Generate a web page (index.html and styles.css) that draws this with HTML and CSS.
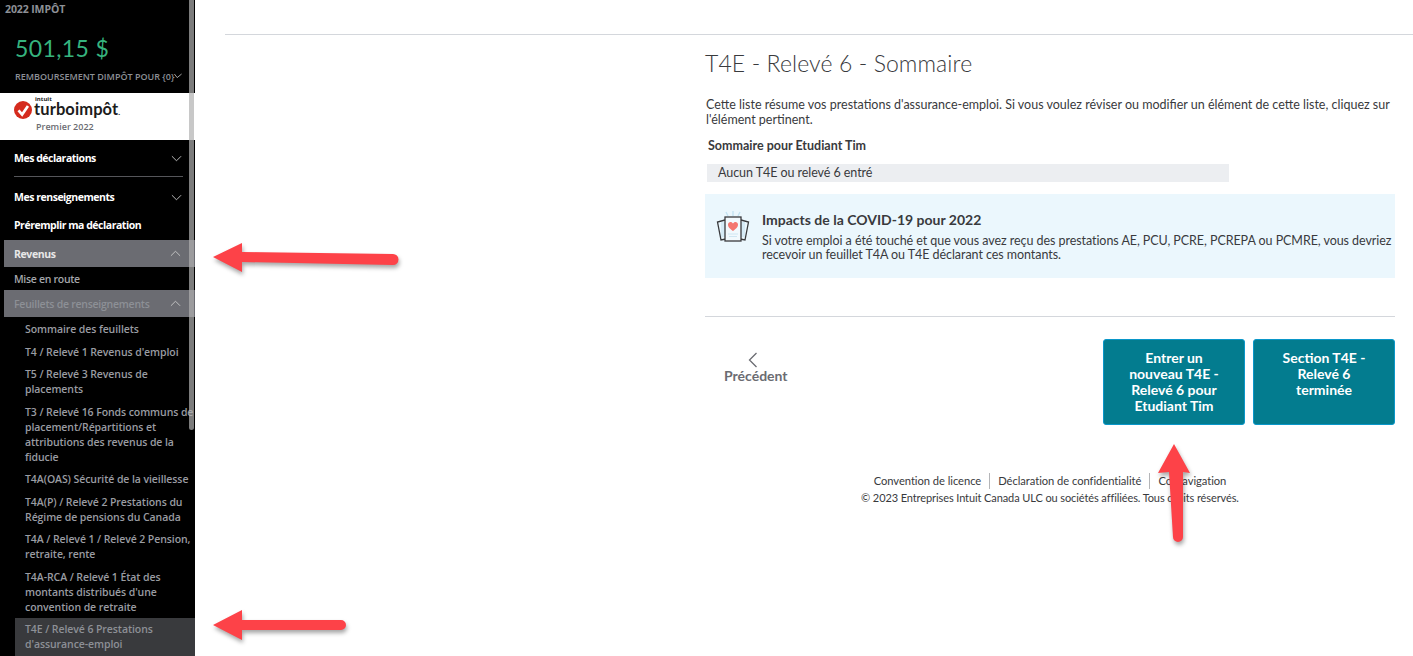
FILE: index.html
```html
<!DOCTYPE html>
<html lang="fr">
<head>
<meta charset="utf-8">
<title>T4E - Relevé 6 - Sommaire</title>
<link rel="stylesheet" href="styles.css">
</head>
<body>
<div class="app">
  <aside class="sidebar">
    <div class="tax">
      <div class="tax-year">2022 IMPÔT</div>
      <div class="tax-amount">501,15 $</div>
      <div class="tax-label">REMBOURSEMENT DIMPÔT POUR {0}<svg class="tax-chev" viewBox="0 0 10 6"><path d="M.5.5 4 5 9.500.5"/></svg></div>
    </div>
    <div class="logo">
      <div class="logo-row">
        <svg class="logo-check" viewBox="0 0 20 20"><circle cx="10" cy="10" r="10" fill="#d52b1e"/><path d="M5 10.500 9 15 15.500 5.500" fill="none" stroke="#fff" stroke-width="3"/></svg>
        <div class="logo-words"><span class="logo-intuit">intuit</span><span class="logo-name">turboimpôt<small>.</small></span></div>
      </div>
      <div class="logo-sub">Premier 2022</div>
    </div>
    <nav class="nav">
      <div class="nav-top divided">Mes déclarations<svg class="chev" viewBox="0 0 12 7"><path d="M1 1l5 5 5-5"/></svg></div>
      <div class="nav-top second">Mes renseignements<svg class="chev" viewBox="0 0 12 7"><path d="M1 1l5 5 5-5"/></svg></div>
      <div class="nav-top third">Préremplir ma déclaration</div>
      <div class="nav-section active">Revenus<svg class="chev" viewBox="0 0 12 7"><path d="M1 6l5-5 5 5"/></svg></div>
      <div class="nav-plain">Mise en route</div>
      <div class="nav-section dim">Feuillets de renseignements<svg class="chev" viewBox="0 0 12 7"><path d="M1 6l5-5 5 5"/></svg></div>
      <ul class="nav-list">
        <li>Sommaire des feuillets</li>
        <li>T4 / Relevé 1 Revenus d'emploi</li>
        <li>T5 / Relevé 3 Revenus de placements</li>
        <li>T3 / Relevé 16 Fonds communs de placement/Répartitions et attributions des revenus de la fiducie</li>
        <li>T4A(OAS) Sécurité de la vieillesse</li>
        <li>T4A(P) / Relevé 2 Prestations du Régime de pensions du Canada</li>
        <li>T4A / Relevé 1 / Relevé 2 Pension, retraite, rente</li>
        <li>T4A-RCA / Relevé 1 État des montants distribués d'une convention de retraite</li>
        <li class="current">T4E / Relevé 6 Prestations d'assurance-emploi</li>
      </ul>
    </nav>
    <div class="thumb"></div>
  </aside>
  <main class="main">
    <div class="top-rule"></div>
    <section class="content">
      <h1 class="title">T4E - Relevé 6 - Sommaire</h1>
      <p class="intro">Cette liste résume vos prestations d'assurance-emploi. Si vous voulez réviser ou modifier un élément de cette liste, cliquez sur l'élément pertinent.</p>
      <div class="summary-head">Sommaire pour Etudiant Tim</div>
      <div class="summary-row">Aucun T4E ou relevé 6 entré</div>
      <div class="notice">
        <svg class="notice-icon" viewBox="0 0 34 34">
          <path d="M17 1v5M10 2l2 4M24 2l-2 4" stroke="#c5e3f2" stroke-width="1.400" fill="none"/>
          <rect x="5" y="12" width="24" height="15" fill="#d6ebf6"/>
          <path d="M9 10 1.500 12 5 30l5-1M25 10l7.500 2L29 30l-5-1" fill="none" stroke="#393a3d" stroke-width="1.300"/>
          <rect x="9" y="7" width="16" height="24" fill="#f2f9fd" stroke="#393a3d" stroke-width="1.300"/>
          <path d="M17 21c-4-3-5-4.500-5-6.500 0-3 3.800-3.500 5-1 1.200-2.500 5-2 5 1 0 2-1 3.500-5 6.500z" fill="#f4766f"/>
          <path d="M12 24h10M13 26.500h8" stroke="#cfe6f2" stroke-width="1"/>
        </svg>
        <div class="notice-text">
          <div class="notice-title">Impacts de la COVID-19 pour 2022</div>
          <div class="notice-body">Si votre emploi a été touché et que vous avez reçu des prestations AE, PCU, PCRE, PCREPA ou PCMRE, vous devriez recevoir un feuillet T4A ou T4E déclarant ces montants.</div>
        </div>
      </div>
      <div class="rule"></div>
      <div class="actions">
        <div class="back">
          <svg class="back-icon" viewBox="0 0 10 16"><path d="M8.500 1 1.500 8l7 7"/></svg>
          <span>Précédent</span>
        </div>
        <div class="buttons">
          <button class="btn">Entrer un nouveau T4E - Relevé 6 pour Etudiant Tim</button>
          <button class="btn">Section T4E - Relevé 6 terminée</button>
        </div>
      </div>
      <footer class="footer">
        <div class="links"><span>Convention de licence</span><span>Déclaration de confidentialité</span><span>Co-navigation</span></div>
        <div class="copy">© 2023 Entreprises Intuit Canada ULC ou sociétés affiliées. Tous droits réservés.</div>
      </footer>
    </section>
  </main>
</div>
<svg class="arrow arrow-a" viewBox="0 0 190 34"><path d="M1 17 30 3v9l151 2a5.500 5.500 0 0 1 0 11L30 22v10z" fill="#fd4248"/></svg>
<svg class="arrow arrow-b" viewBox="0 0 136 34"><path d="M1 17 30 2v10h99a5 5 0 0 1 0 10H30v10z" fill="#fd4248"/></svg>
<svg class="arrow arrow-c" viewBox="0 0 36 102"><path d="M18 2 34 31l-7-1v65a5 5 0 0 1-10 0L13 30l-11 1z" fill="#fd4248"/></svg>
</body>
</html>
```
FILE: styles.css
```css
* { box-sizing: border-box; }
html, body { margin: 0; height: 656px; overflow: hidden; background: #fff; }
body { font-family: "Lato", "Liberation Sans", sans-serif; color: #393a3d; position: relative; }
.app { display: flex; height: 656px; }

.sidebar { width: 195px; flex: none; background: #000; position: relative; overflow: hidden; font-family: "Open Sans", "Noto Sans", sans-serif; font-weight: 600; }
.tax { height: 93px; padding: 2px 0 0 5px; }
.tax-year { font-size: 10.500px; line-height: 14px; color: #8d9096; font-weight: 700; letter-spacing: -.1px; }
.tax-amount { font-size: 23px; line-height: 30px; margin: 17px 0 0 10px; color: #36b37e; font-weight: 400; font-family: "Lato", sans-serif; letter-spacing: .4px; }
.tax-label { font-size: 9px; line-height: 12px; margin: 8px 0 0 10px; color: #8d9096; position: relative; white-space: nowrap; }
.tax-chev { position: absolute; left: 159px; top: 2px; width: 8px; height: 6px; fill: none; stroke: #c8c8c8; }
.logo { height: 47px; background: #fff; padding: 6px 0 0 14px; }
.logo-row { display: flex; gap: 2px; align-items: flex-end; height: 21px; }
.logo-check { width: 18px; height: 18px; flex: none; margin-bottom: 1px; }
.logo-words { display: flex; flex-direction: column; color: #1c1c1c; }
.logo-intuit { font-size: 6px; line-height: 6px; font-weight: 700; margin-left: 1px; }
.logo-name { font-size: 16.500px; line-height: 15px; font-family: "Lato", sans-serif; font-weight: 700; letter-spacing: .1px; }
.logo-name small { font-size: 8px; }
.logo-sub { font-size: 9px; line-height: 12px; margin: 1px 0 0 22px; color: #6b6c72; }

.nav-top { display: flex; align-items: center; justify-content: space-between; color: #fff; font-size: 10.500px; font-weight: 700; margin-left: 14px; width: 169px; letter-spacing: -.47px; }
.divided { height: 37px; border-bottom: 1px solid #55565a; padding-right: 1px; }
.second { height: 40px; padding-right: 1px; }
.third { height: 16px; }
.nav-section { height: 27px; margin-left: 4px; padding: 0 14px 0 10px; display: flex; align-items: center; justify-content: space-between; font-size: 10.500px; font-weight: 700; background: #6b6c72; color: #e8e8e8; }
.active { margin-top: 7px; letter-spacing: -.4px; }
.dim { color: #8d9096; font-weight: 600; letter-spacing: -.25px; }
.nav-plain { height: 23px; padding: 0 0 0 14px; display: flex; align-items: center; font-size: 10.500px; color: #a4a6ab; letter-spacing: -.3px; }
.chev { width: 11px; height: 7px; flex: none; fill: none; stroke: #c8c8c8; stroke-width: 1; }
.nav-list { list-style: none; margin: 0; padding: 0 0 0 15px; font-size: 10.500px; line-height: 15px; color: #9a9ca2; }
.nav-list li { padding: 3.760px 0 3.760px 10px; letter-spacing: -.08px; }
.nav-list li:first-child { padding-top: 5px; }
.nav-list .current { background: #393a3d; color: #8d9096; }
.thumb { position: absolute; left: 189px; top: 0; width: 5px; height: 430px; border-radius: 0 0 3px 3px; background: rgba(176,176,176,.7); }

.main { flex: 1; min-width: 0; padding: 34px 0 0 30px; }
.top-rule { height: 1px; background: #d4d7dc; }
.content { margin-left: 480px; width: 690px; }
.title { margin: 13px 0 0; font-size: 23px; line-height: 30px; font-weight: 300; letter-spacing: .1px; color: #393a3d; }
.intro { margin: 19px 0 0 1px; font-size: 12.500px; line-height: 15px; }
.summary-head { margin: 10px 0 0 3px; font-size: 12.500px; line-height: 18px; font-weight: 700; }
.summary-row { margin: 9px 0 0 2px; width: 522px; height: 18px; background: #eceef1; padding-left: 11px; font-size: 12.500px; line-height: 18px; letter-spacing: -.06px; }
.notice { margin-top: 12px; height: 84px; background: #ebf7fd; display: flex; padding: 16px 0 0 11px; }
.notice-icon { width: 34px; height: 34px; flex: none; margin-right: 12px; }
.notice-title { font-size: 14px; line-height: 17px; font-weight: 700; margin-top: 1px; }
.notice-body { font-size: 12.500px; line-height: 14px; margin-top: 6px; width: 640px; letter-spacing: -.06px; }
.rule { margin-top: 38px; height: 1px; background: #d4d7dc; }
.actions { margin-top: 22px; display: flex; justify-content: space-between; }
.back { width: 100px; padding: 13px 0 0 19px; display: flex; flex-direction: column; color: #6b6c72; font-size: 14px; line-height: 16px; font-weight: 700; }
.back-icon { width: 10px; height: 16px; margin: 0 0 0 24px; fill: none; stroke: #6b6c72; stroke-width: 1.300; }
.buttons { display: flex; gap: 8px; }
.btn { width: 142px; height: 86px; padding: 10px 18px 0; display: flex; justify-content: center; align-items: flex-start; background: #037c8f; border: 1px solid #0a97c9; border-radius: 3px; color: #fff; font-family: "Lato", sans-serif; font-size: 14px; line-height: 16px; font-weight: 700; text-align: center; }
.footer { margin-top: 48px; text-align: center; font-size: 11px; letter-spacing: -.1px; }
.links { line-height: 16px; display: flex; justify-content: center; font-size: 11.200px; letter-spacing: -.05px; }
.links span { padding: 0 8px; border-left: 1px solid #b4b5b8; }
.links span:first-child { border-left: 0; }
.copy { line-height: 17px; }

.arrow { position: absolute; filter: drop-shadow(1px 3px 2px rgba(0,0,0,.35)); }
.arrow-a { left: 212px; top: 240px; width: 190px; height: 34px; }
.arrow-b { left: 212px; top: 608px; width: 136px; height: 34px; }
.arrow-c { left: 1156px; top: 442px; width: 36px; height: 102px; }
```
